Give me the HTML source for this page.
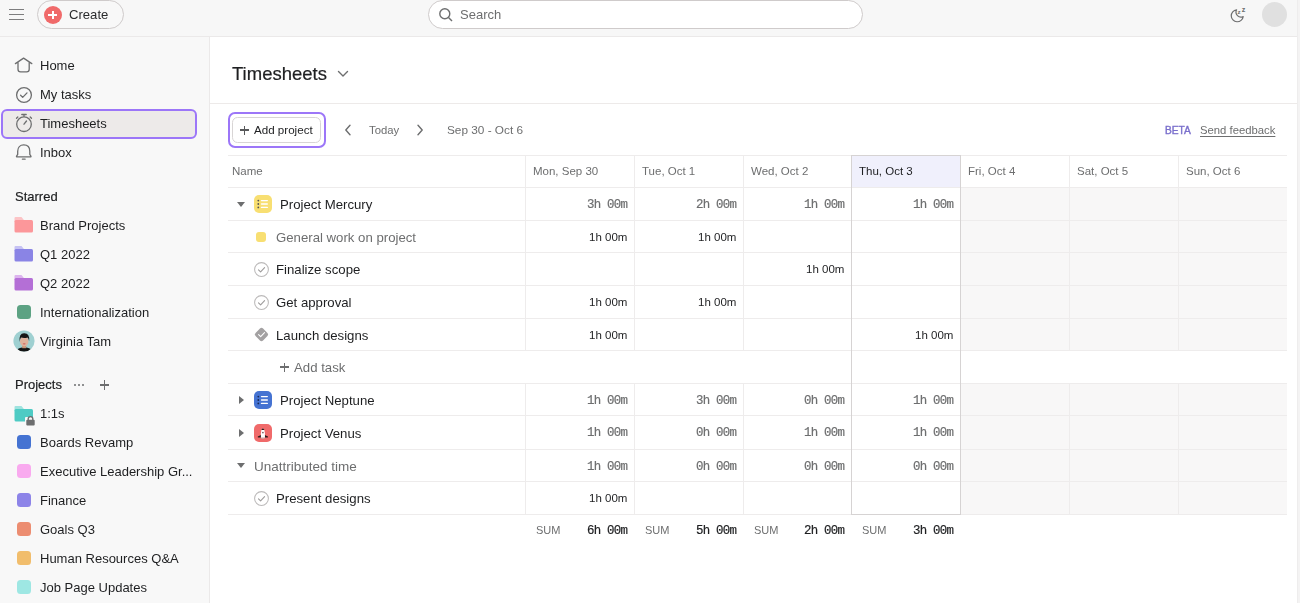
<!DOCTYPE html>
<html><head><meta charset="utf-8">
<style>
*{box-sizing:border-box;margin:0;padding:0}
html,body{width:1300px;height:603px;overflow:hidden}
body{position:relative;background:#f8f7f7;font-family:"Liberation Sans",sans-serif;color:#1e1f21;font-size:13px}
.abs{position:absolute}
#top{position:absolute;left:0;top:0;width:1300px;height:37px;background:#f7f7f7;border-bottom:1px solid #ebe9e9}
#side{position:absolute;left:0;top:37px;width:210px;height:566px;background:#f8f8f8;border-right:1px solid #ebe9e9}
#main{position:absolute;left:210px;top:37px;width:1087px;height:566px;background:#fff}
#rstrip{position:absolute;left:1297px;top:0;width:3px;height:603px;background:#f4f3f3;border-left:1px solid #eeeded}
.nav{position:absolute;left:40px;font-size:13px;color:#1e1f21;line-height:16px}
.ico{position:absolute}
.t{position:absolute;white-space:nowrap;line-height:16px;will-change:transform}
.hl{position:absolute;background:#edeae9}
.mono{font-family:"Liberation Mono",monospace}
.hline{position:absolute;left:228px;width:1059px;height:1px;background:#eeecec}
.vline{position:absolute;width:1px;background:#eeecec}
.hd{font-size:11.5px;color:#6d6e6f}
.mn{font-family:"Liberation Mono",monospace;font-size:12.4px;letter-spacing:-0.75px;color:#6d6e6f;-webkit-text-stroke:0.2px #6d6e6f}
.sn{font-size:11.5px;color:#1e1f21}
.sum{font-size:11px;color:#6d6e6f}
.nm{font-size:13.2px;color:#1e1f21;margin-top:0.7px}
</style></head><body>
<div id="top">
  <!-- hamburger -->
  <div class="abs" style="left:9px;top:8.5px;width:15px;height:1.2px;background:#7d7d7e"></div>
  <div class="abs" style="left:9px;top:14px;width:15px;height:1.2px;background:#7d7d7e"></div>
  <div class="abs" style="left:9px;top:19.2px;width:15px;height:1.2px;background:#7d7d7e"></div>
  <!-- create -->
  <div class="abs" style="left:36.5px;top:0px;width:87px;height:29px;border:1px solid #cfcbcb;border-radius:15px;background:#f8f8f8"></div>
  <div class="abs" style="left:43.5px;top:6px;width:18px;height:18px;border-radius:50%;background:#f06a6a"></div>
  <div class="abs" style="left:48.2px;top:14.1px;width:8.6px;height:2px;background:#fff"></div>
  <div class="abs" style="left:51.5px;top:10.8px;width:2px;height:8.6px;background:#fff"></div>
  <div class="t" style="left:69.3px;top:7px;font-size:13.1px;color:#2a2b2d">Create</div>
  <!-- search -->
  <div class="abs" style="left:428px;top:0px;width:435px;height:29px;border:1px solid #cfcbcb;border-radius:15px;background:#fff"></div>
  <svg class="abs" style="left:438px;top:7px" width="16" height="16" viewBox="0 0 16 16"><circle cx="6.8" cy="6.8" r="5" fill="none" stroke="#6d6e6f" stroke-width="1.4"/><line x1="10.5" y1="10.5" x2="14" y2="14" stroke="#6d6e6f" stroke-width="1.4"/></svg>
  <div class="t" style="left:460px;top:7px;font-size:13px;color:#6d6e6f">Search</div>
  <!-- moon -->
  <svg class="abs" style="left:1228px;top:4px" width="20" height="20" viewBox="0 0 20 20"><path d="M8.6 5.8 A6 6 0 1 0 15.2 12.6 A5 5 0 0 1 8.6 5.8 Z" fill="none" stroke="#6d6e6f" stroke-width="1.2" stroke-linejoin="round"/><text x="9.6" y="9.6" font-size="6.2" fill="#6d6e6f" font-family="Liberation Sans" font-weight="bold">z</text><text x="13.8" y="7.6" font-size="7.2" fill="#6d6e6f" font-family="Liberation Sans" font-weight="bold">z</text></svg>
  <div class="abs" style="left:1262px;top:2px;width:25px;height:25px;border-radius:50%;background:#e0e0e0"></div>
</div>
<div id="rstrip"></div>

<div id="side">
  <!-- Timesheets highlight -->
  <div class="abs" style="left:1px;top:72px;width:196px;height:30px;border:2px solid #9c76f8;border-radius:6px;background:#edeae9"></div>
  <!-- icons -->
  <svg class="abs" style="left:14px;top:19px" width="20" height="18" viewBox="0 0 20 18"><path d="M1.4 7.6 L9.6 2.1 L17.8 7.6 M4 5.9 V13.3 Q4 15.9 6.6 15.9 H12.6 Q15.2 15.9 15.2 13.3 V5.9" fill="none" stroke="#6d6e6f" stroke-width="1.3" stroke-linejoin="round" stroke-linecap="round"/></svg>
  <svg class="abs" style="left:14.8px;top:49px" width="18" height="18" viewBox="0 0 18 18"><circle cx="9" cy="9" r="7.4" fill="none" stroke="#6d6e6f" stroke-width="1.3"/><path d="M5.6 9.3 L7.7 11.4 L12 6.9" fill="none" stroke="#6d6e6f" stroke-width="1.3" stroke-linecap="round" stroke-linejoin="round"/></svg>
  <svg class="abs" style="left:14.7px;top:76px" width="18" height="20" viewBox="0 0 18 20"><circle cx="9" cy="11.2" r="7.3" fill="none" stroke="#6d6e6f" stroke-width="1.3"/><line x1="6.8" y1="1.5" x2="11.2" y2="1.5" stroke="#6d6e6f" stroke-width="1.3" stroke-linecap="round"/><line x1="9" y1="1.5" x2="9" y2="3.8" stroke="#6d6e6f" stroke-width="1.3"/><line x1="9" y1="11.2" x2="11.5" y2="8" stroke="#6d6e6f" stroke-width="1.3" stroke-linecap="round"/><line x1="15.2" y1="4" x2="16.5" y2="5.3" stroke="#6d6e6f" stroke-width="1.3" stroke-linecap="round"/><line x1="2.8" y1="4" x2="1.5" y2="5.3" stroke="#6d6e6f" stroke-width="1.3" stroke-linecap="round"/></svg>
  <svg class="abs" style="left:14px;top:106px" width="20" height="20" viewBox="0 0 20 20"><path d="M3.7 11.4 V8.2 C3.7 4.3 6.1 1.9 9.75 1.9 C13.4 1.9 15.8 4.3 15.8 8.2 V11.4 L16.9 13.1 Q17.3 13.9 16.4 13.9 H3.1 Q2.2 13.9 2.6 13.1 Z" fill="none" stroke="#6d6e6f" stroke-width="1.3" stroke-linejoin="round"/><path d="M8.4 16.2 H11.1" stroke="#6d6e6f" stroke-width="1.3" stroke-linecap="round"/></svg>
  <div class="t" style="left:40px;top:21px;font-size:13px">Home</div>
  <div class="t" style="left:40px;top:50px;font-size:13px">My tasks</div>
  <div class="t" style="left:40px;top:79px;font-size:13px">Timesheets</div>
  <div class="t" style="left:40px;top:108px;font-size:13px">Inbox</div>

  <div class="t" style="left:15px;top:152px;font-size:13px;color:#1e1f21;-webkit-text-stroke:0.2px #1e1f21">Starred</div>
  <!-- folders -->
  <svg class="abs" style="left:14px;top:179px" width="20" height="18" viewBox="0 0 20 18"><path d="M0.5 2 Q0.5 1 1.5 1 H7.5 L9.5 3.5 V6 H0.5 Z" fill="#fcc4c6"/><rect x="0.5" y="4" width="18.5" height="12.5" rx="1.5" fill="#fc979a"/></svg>
  <div class="t" style="left:40px;top:181px;font-size:13px">Brand Projects</div>
  <svg class="abs" style="left:14px;top:208px" width="20" height="18" viewBox="0 0 20 18"><path d="M0.5 2 Q0.5 1 1.5 1 H7.5 L9.5 3.5 V6 H0.5 Z" fill="#c6c2f3"/><rect x="0.5" y="4" width="18.5" height="12.5" rx="1.5" fill="#8a84e5"/></svg>
  <div class="t" style="left:40px;top:210px;font-size:13px">Q1 2022</div>
  <svg class="abs" style="left:14px;top:237px" width="20" height="18" viewBox="0 0 20 18"><path d="M0.5 2 Q0.5 1 1.5 1 H7.5 L9.5 3.5 V6 H0.5 Z" fill="#dcb4ee"/><rect x="0.5" y="4" width="18.5" height="12.5" rx="1.5" fill="#b46fd6"/></svg>
  <div class="t" style="left:40px;top:239px;font-size:13px">Q2 2022</div>
  <div class="abs" style="left:16.5px;top:267.5px;width:14.5px;height:14.5px;border-radius:3.5px;background:#5da283"></div>
  <div class="t" style="left:40px;top:268px;font-size:13px">Internationalization</div>
  <!-- avatar -->
  <svg class="abs" style="left:12.5px;top:293px" width="22" height="22" viewBox="0 0 22 22"><defs><clipPath id="av"><circle cx="11" cy="11" r="10.6"/></clipPath></defs><g clip-path="url(#av)"><rect width="22" height="22" fill="#9fd0d1"/><path d="M2.5 23 Q4 18.2 9 17.6 H13.4 Q18.4 18.2 19.8 23 Z" fill="#141414"/><rect x="9.2" y="14" width="4" height="4.2" fill="#c99478"/><ellipse cx="11.2" cy="11.4" rx="4.2" ry="5" fill="#dfb29c"/><path d="M6.6 12 Q5.6 3 11.3 3.2 Q17 3.2 16.1 11.2 Q15.6 8 14.6 7.4 Q11.6 8.4 8 7.6 Q7 9 6.6 12 Z" fill="#161616"/><ellipse cx="11.2" cy="13.8" rx="1.5" ry="0.6" fill="#d0605a"/></g></svg>
  <div class="t" style="left:40px;top:297px;font-size:13px">Virginia Tam</div>

  <div class="t" style="left:15px;top:340px;font-size:13px;-webkit-text-stroke:0.2px #1e1f21">Projects</div>
  <div class="abs" style="left:73.5px;top:347px;width:2px;height:2px;border-radius:1px;background:#6d6e6f"></div>
  <div class="abs" style="left:77.7px;top:347px;width:2px;height:2px;border-radius:1px;background:#6d6e6f"></div>
  <div class="abs" style="left:81.9px;top:347px;width:2px;height:2px;border-radius:1px;background:#6d6e6f"></div>
  <div class="abs" style="left:99.5px;top:347.3px;width:9.5px;height:1.3px;background:#6d6e6f"></div>
  <div class="abs" style="left:103.6px;top:343px;width:1.3px;height:9.5px;background:#6d6e6f"></div>
  <!-- 1:1s folder with lock -->
  <svg class="abs" style="left:14px;top:368px" width="24" height="22" viewBox="0 0 24 22"><path d="M0.5 2 Q0.5 1 1.5 1 H7.5 L9.5 3.5 V6 H0.5 Z" fill="#9fe3df"/><rect x="0.5" y="4" width="18.5" height="12.5" rx="1.5" fill="#4ecbc4"/><rect x="11" y="12" width="11" height="9" rx="1" fill="#f8f8f8"/><path d="M14.2 15 V13.8 Q14.2 11.6 16.5 11.6 Q18.8 11.6 18.8 13.8 V15" fill="none" stroke="#6d6e6f" stroke-width="1.4"/><rect x="12.3" y="14.8" width="8.4" height="5.6" rx="1" fill="#6d6e6f"/></svg>
  <div class="t" style="left:40px;top:369px;font-size:13px">1:1s</div>
  <div class="abs" style="left:16.5px;top:397.5px;width:14.5px;height:14.5px;border-radius:3.5px;background:#4573d2"></div>
  <div class="t" style="left:40px;top:398px;font-size:13px">Boards Revamp</div>
  <div class="abs" style="left:16.5px;top:426.5px;width:14.5px;height:14.5px;border-radius:3.5px;background:#f9aaef"></div>
  <div class="t" style="left:40px;top:427px;font-size:13px">Executive Leadership Gr...</div>
  <div class="abs" style="left:16.5px;top:455.5px;width:14.5px;height:14.5px;border-radius:3.5px;background:#8d84e8"></div>
  <div class="t" style="left:40px;top:456px;font-size:13px">Finance</div>
  <div class="abs" style="left:16.5px;top:484.5px;width:14.5px;height:14.5px;border-radius:3.5px;background:#ec8d71"></div>
  <div class="t" style="left:40px;top:485px;font-size:13px">Goals Q3</div>
  <div class="abs" style="left:16.5px;top:513.5px;width:14.5px;height:14.5px;border-radius:3.5px;background:#f1bd6c"></div>
  <div class="t" style="left:40px;top:514px;font-size:13px">Human Resources Q&amp;A</div>
  <div class="abs" style="left:16.5px;top:542.5px;width:14.5px;height:14.5px;border-radius:3.5px;background:#9ee7e3"></div>
  <div class="t" style="left:40px;top:543px;font-size:13px">Job Page Updates</div>
</div>

<div id="main"></div>
<!-- title -->
<div class="t" style="left:232px;top:63px;font-size:18.5px;line-height:22px;color:#1e1f21;-webkit-text-stroke:0.2px #1e1f21">Timesheets</div>
<svg class="abs" style="left:336px;top:69px" width="14" height="9" viewBox="0 0 14 9"><path d="M2.5 2.6 L7 7 L11.5 2.6" fill="none" stroke="#6d6e6f" stroke-width="1.4" stroke-linecap="round" stroke-linejoin="round"/></svg>
<div class="abs" style="left:210px;top:103px;width:1087px;height:1px;background:#edeae9"></div>
<!-- toolbar -->
<div class="abs" style="left:228px;top:112px;width:98px;height:36px;border:2px solid #9c76f8;border-radius:7px"></div>
<div class="abs" style="left:231.8px;top:117px;width:89.2px;height:26px;border:1px solid #d8d5d5;border-radius:5.5px;background:#fff"></div>
<div class="abs" style="left:240.2px;top:129.3px;width:9px;height:1.4px;background:#58595b"></div>
<div class="abs" style="left:244px;top:125.5px;width:1.4px;height:9px;background:#58595b"></div>
<div class="t" style="left:254px;top:122px;font-size:11.6px;color:#1e1f21">Add project</div>
<svg class="abs" style="left:343px;top:123px" width="10" height="14" viewBox="0 0 10 14"><path d="M7 2.3 L2.8 7 L7 11.7" fill="none" stroke="#6d6e6f" stroke-width="1.4" stroke-linecap="round" stroke-linejoin="round"/></svg>
<div class="t" style="left:368.5px;top:122px;font-size:11.3px;color:#6d6e6f">Today</div>
<svg class="abs" style="left:414.5px;top:123px" width="10" height="14" viewBox="0 0 10 14"><path d="M3 2.3 L7.2 7 L3 11.7" fill="none" stroke="#6d6e6f" stroke-width="1.4" stroke-linecap="round" stroke-linejoin="round"/></svg>
<div class="t" style="left:447px;top:122px;font-size:11.8px;color:#6d6e6f">Sep 30 - Oct 6</div>
<div class="t" style="left:1164.5px;font-size:10.2px;color:#7a6fcc;-webkit-text-stroke:0.4px #7a6fcc;top:122.6px">BETA</div>
<div class="t" style="left:1199.5px;top:122px;font-size:11.3px;color:#6d6e6f;text-decoration:underline;text-underline-offset:2px">Send feedback</div>
<div class="abs" style="left:960px;top:187px;width:327px;height:33px;background:#f8f7f7"></div>
<div class="abs" style="left:960px;top:220px;width:327px;height:32px;background:#f8f7f7"></div>
<div class="abs" style="left:960px;top:252px;width:327px;height:33px;background:#f8f7f7"></div>
<div class="abs" style="left:960px;top:285px;width:327px;height:33px;background:#f8f7f7"></div>
<div class="abs" style="left:960px;top:318px;width:327px;height:32px;background:#f8f7f7"></div>
<div class="abs" style="left:960px;top:383px;width:327px;height:32px;background:#f8f7f7"></div>
<div class="abs" style="left:960px;top:415px;width:327px;height:34px;background:#f8f7f7"></div>
<div class="abs" style="left:960px;top:449px;width:327px;height:32px;background:#f8f7f7"></div>
<div class="abs" style="left:960px;top:481px;width:327px;height:33px;background:#f8f7f7"></div>
<div class="abs" style="left:851px;top:155px;width:109px;height:32px;background:#f0f0fc"></div>
<div class="hline" style="top:155px"></div>
<div class="hline" style="top:187px"></div>
<div class="hline" style="top:220px"></div>
<div class="hline" style="top:252px"></div>
<div class="hline" style="top:285px"></div>
<div class="hline" style="top:318px"></div>
<div class="hline" style="top:350px"></div>
<div class="hline" style="top:383px"></div>
<div class="hline" style="top:415px"></div>
<div class="hline" style="top:449px"></div>
<div class="hline" style="top:481px"></div>
<div class="hline" style="top:514px"></div>
<div class="vline" style="left:525px;top:155px;height:32px"></div>
<div class="vline" style="left:634px;top:155px;height:32px"></div>
<div class="vline" style="left:743px;top:155px;height:32px"></div>
<div class="vline" style="left:1069px;top:155px;height:32px"></div>
<div class="vline" style="left:1178px;top:155px;height:32px"></div>
<div class="vline" style="left:525px;top:187px;height:33px"></div>
<div class="vline" style="left:634px;top:187px;height:33px"></div>
<div class="vline" style="left:743px;top:187px;height:33px"></div>
<div class="vline" style="left:1069px;top:187px;height:33px"></div>
<div class="vline" style="left:1178px;top:187px;height:33px"></div>
<div class="vline" style="left:525px;top:220px;height:32px"></div>
<div class="vline" style="left:634px;top:220px;height:32px"></div>
<div class="vline" style="left:743px;top:220px;height:32px"></div>
<div class="vline" style="left:1069px;top:220px;height:32px"></div>
<div class="vline" style="left:1178px;top:220px;height:32px"></div>
<div class="vline" style="left:525px;top:252px;height:33px"></div>
<div class="vline" style="left:634px;top:252px;height:33px"></div>
<div class="vline" style="left:743px;top:252px;height:33px"></div>
<div class="vline" style="left:1069px;top:252px;height:33px"></div>
<div class="vline" style="left:1178px;top:252px;height:33px"></div>
<div class="vline" style="left:525px;top:285px;height:33px"></div>
<div class="vline" style="left:634px;top:285px;height:33px"></div>
<div class="vline" style="left:743px;top:285px;height:33px"></div>
<div class="vline" style="left:1069px;top:285px;height:33px"></div>
<div class="vline" style="left:1178px;top:285px;height:33px"></div>
<div class="vline" style="left:525px;top:318px;height:32px"></div>
<div class="vline" style="left:634px;top:318px;height:32px"></div>
<div class="vline" style="left:743px;top:318px;height:32px"></div>
<div class="vline" style="left:1069px;top:318px;height:32px"></div>
<div class="vline" style="left:1178px;top:318px;height:32px"></div>
<div class="vline" style="left:525px;top:383px;height:32px"></div>
<div class="vline" style="left:634px;top:383px;height:32px"></div>
<div class="vline" style="left:743px;top:383px;height:32px"></div>
<div class="vline" style="left:1069px;top:383px;height:32px"></div>
<div class="vline" style="left:1178px;top:383px;height:32px"></div>
<div class="vline" style="left:525px;top:415px;height:34px"></div>
<div class="vline" style="left:634px;top:415px;height:34px"></div>
<div class="vline" style="left:743px;top:415px;height:34px"></div>
<div class="vline" style="left:1069px;top:415px;height:34px"></div>
<div class="vline" style="left:1178px;top:415px;height:34px"></div>
<div class="vline" style="left:525px;top:449px;height:32px"></div>
<div class="vline" style="left:634px;top:449px;height:32px"></div>
<div class="vline" style="left:743px;top:449px;height:32px"></div>
<div class="vline" style="left:1069px;top:449px;height:32px"></div>
<div class="vline" style="left:1178px;top:449px;height:32px"></div>
<div class="vline" style="left:525px;top:481px;height:33px"></div>
<div class="vline" style="left:634px;top:481px;height:33px"></div>
<div class="vline" style="left:743px;top:481px;height:33px"></div>
<div class="vline" style="left:1069px;top:481px;height:33px"></div>
<div class="vline" style="left:1178px;top:481px;height:33px"></div>
<div class="abs" style="left:851px;top:155px;width:110px;height:360px;border:1px solid #d6d3d3"></div>
<div class="t hd" style="left:232px;top:163.4px">Name</div>
<div class="t hd" style="left:533px;top:163.4px;color:#6d6e6f">Mon, Sep 30</div>
<div class="t hd" style="left:642px;top:163.4px;color:#6d6e6f">Tue, Oct 1</div>
<div class="t hd" style="left:751px;top:163.4px;color:#6d6e6f">Wed, Oct 2</div>
<div class="t hd" style="left:859px;top:163.4px;color:#1e1f21">Thu, Oct 3</div>
<div class="t hd" style="left:968px;top:163.4px;color:#6d6e6f">Fri, Oct 4</div>
<div class="t hd" style="left:1077px;top:163.4px;color:#6d6e6f">Sat, Oct 5</div>
<div class="t hd" style="left:1186px;top:163.4px;color:#6d6e6f">Sun, Oct 6</div>
<div class="t mn" style="right:673.25px;top:196.8px">3h 00m</div>
<div class="t mn" style="right:564.25px;top:196.8px">2h 00m</div>
<div class="t mn" style="right:456.25px;top:196.8px">1h 00m</div>
<div class="t mn" style="right:347.25px;top:196.8px">1h 00m</div>
<div class="t sn" style="right:673px;top:228.5px">1h 00m</div>
<div class="t sn" style="right:564px;top:228.5px">1h 00m</div>
<div class="t sn" style="right:456px;top:260.5px">1h 00m</div>
<div class="t sn" style="right:673px;top:293.5px">1h 00m</div>
<div class="t sn" style="right:564px;top:293.5px">1h 00m</div>
<div class="t sn" style="right:673px;top:326.5px">1h 00m</div>
<div class="t sn" style="right:347px;top:326.5px">1h 00m</div>
<div class="t mn" style="right:673.25px;top:392.8px">1h 00m</div>
<div class="t mn" style="right:564.25px;top:392.8px">3h 00m</div>
<div class="t mn" style="right:456.25px;top:392.8px">0h 00m</div>
<div class="t mn" style="right:347.25px;top:392.8px">1h 00m</div>
<div class="t mn" style="right:673.25px;top:424.8px">1h 00m</div>
<div class="t mn" style="right:564.25px;top:424.8px">0h 00m</div>
<div class="t mn" style="right:456.25px;top:424.8px">1h 00m</div>
<div class="t mn" style="right:347.25px;top:424.8px">1h 00m</div>
<div class="t mn" style="right:673.25px;top:458.8px">1h 00m</div>
<div class="t mn" style="right:564.25px;top:458.8px">0h 00m</div>
<div class="t mn" style="right:456.25px;top:458.8px">0h 00m</div>
<div class="t mn" style="right:347.25px;top:458.8px">0h 00m</div>
<div class="t sn" style="right:673px;top:489.5px">1h 00m</div>
<div class="t sum" style="left:536px;top:522px">SUM</div>
<div class="t mn" style="right:673.25px;top:522.6px;color:#1e1f21;-webkit-text-stroke:0.2px #1e1f21">6h 00m</div>
<div class="t sum" style="left:645px;top:522px">SUM</div>
<div class="t mn" style="right:564.25px;top:522.6px;color:#1e1f21;-webkit-text-stroke:0.2px #1e1f21">5h 00m</div>
<div class="t sum" style="left:754px;top:522px">SUM</div>
<div class="t mn" style="right:456.25px;top:522.6px;color:#1e1f21;-webkit-text-stroke:0.2px #1e1f21">2h 00m</div>
<div class="t sum" style="left:862px;top:522px">SUM</div>
<div class="t mn" style="right:347.25px;top:522.6px;color:#1e1f21;-webkit-text-stroke:0.2px #1e1f21">3h 00m</div>
<!-- name column -->
<svg class="abs" style="left:236px;top:201px" width="10" height="7" viewBox="0 0 10 7"><path d="M1 1 H9 L5 6 Z" fill="#6d6e6f"/></svg>
<svg class="abs" style="left:254px;top:195.3px" width="18" height="18" viewBox="0 0 18 18"><rect width="18" height="18" rx="5" fill="#f8df72"/><circle cx="4.3" cy="5.6" r="0.9" fill="#555"/><circle cx="4.3" cy="9" r="0.9" fill="#555"/><circle cx="4.3" cy="12.4" r="0.9" fill="#555"/><rect x="6.8" y="4.9" width="7.2" height="1.4" rx="0.7" fill="#fff"/><rect x="6.8" y="8.3" width="7.2" height="1.4" rx="0.7" fill="#fff"/><rect x="6.8" y="11.7" width="7.2" height="1.4" rx="0.7" fill="#fff"/></svg>
<div class="t nm" style="left:279.5px;top:196px">Project Mercury</div>
<div class="abs" style="left:256px;top:231.7px;width:10.2px;height:10.2px;border-radius:3px;background:#f8df72"></div>
<div class="t nm" style="left:275.7px;top:229px;color:#6d6e6f">General work on project</div>
<svg class="abs" style="left:253.5px;top:261.8px" width="15" height="15" viewBox="0 0 15 15"><circle cx="7.5" cy="7.5" r="6.9" fill="none" stroke="#bcbaba" stroke-width="1.05"/><path d="M4.5 7.8 L6.6 9.8 L10.6 5.6" fill="none" stroke="#9d9b9b" stroke-width="1.1" stroke-linecap="round" stroke-linejoin="round"/></svg>
<div class="t nm" style="left:275.7px;top:261.5px">Finalize scope</div>
<svg class="abs" style="left:253.5px;top:294.5px" width="15" height="15" viewBox="0 0 15 15"><circle cx="7.5" cy="7.5" r="6.9" fill="none" stroke="#bcbaba" stroke-width="1.05"/><path d="M4.5 7.8 L6.6 9.8 L10.6 5.6" fill="none" stroke="#9d9b9b" stroke-width="1.1" stroke-linecap="round" stroke-linejoin="round"/></svg>
<div class="t nm" style="left:275.7px;top:294px">Get approval</div>
<svg class="abs" style="left:253.5px;top:327.2px" width="15" height="15" viewBox="0 0 15 15"><rect x="2.2" y="2.2" width="10.6" height="10.6" rx="2.2" transform="rotate(45 7.5 7.5)" fill="#a3a1a2"/><path d="M4.6 7.7 L6.7 9.6 L10.5 5.7" fill="none" stroke="#fff" stroke-width="1.1" stroke-linecap="round" stroke-linejoin="round"/></svg>
<div class="t nm" style="left:275.7px;top:327px">Launch designs</div>
<div class="abs" style="left:280px;top:366.3px;width:9px;height:1.4px;background:#6d6e6f"></div>
<div class="abs" style="left:283.8px;top:362.5px;width:1.4px;height:9px;background:#6d6e6f"></div>
<div class="t nm" style="left:294.2px;top:359px;color:#6d6e6f">Add task</div>
<svg class="abs" style="left:238px;top:395px" width="7" height="10" viewBox="0 0 7 10"><path d="M1 1 V9 L6 5 Z" fill="#6d6e6f"/></svg>
<svg class="abs" style="left:254px;top:391px" width="18" height="18" viewBox="0 0 18 18"><rect width="18" height="18" rx="5" fill="#4573d2"/><circle cx="4.3" cy="5.6" r="0.9" fill="#1b2a55"/><circle cx="4.3" cy="9" r="0.9" fill="#1b2a55"/><circle cx="4.3" cy="12.4" r="0.9" fill="#1b2a55"/><rect x="6.8" y="4.9" width="7.2" height="1.4" rx="0.7" fill="#fff"/><rect x="6.8" y="8.3" width="7.2" height="1.4" rx="0.7" fill="#fff"/><rect x="6.8" y="11.7" width="7.2" height="1.4" rx="0.7" fill="#fff"/></svg>
<div class="t nm" style="left:279.5px;top:392px">Project Neptune</div>
<svg class="abs" style="left:238px;top:428px" width="7" height="10" viewBox="0 0 7 10"><path d="M1 1 V9 L6 5 Z" fill="#6d6e6f"/></svg>
<svg class="abs" style="left:254px;top:424.3px" width="18" height="18" viewBox="0 0 18 18"><rect width="18" height="18" rx="5" fill="#f06a6a"/><path d="M7 11 L3.8 12.6 Q3.4 13.6 4.3 13.6 H7 Z M10.8 11 L14 12.6 Q14.4 13.6 13.5 13.6 H10.8 Z" fill="#2b1c1c"/><path d="M8.9 4.3 Q10.9 5.8 10.9 9.2 V13.8 H6.9 V9.2 Q6.9 5.8 8.9 4.3 Z" fill="#fff"/><path d="M8.9 4.3 Q9.9 5 10.4 5.9 H7.4 Q7.9 5 8.9 4.3 Z" fill="#2b1c1c"/><rect x="8.2" y="7.9" width="1.4" height="1.4" fill="#6b4a4a"/><rect x="7.3" y="13.6" width="3.2" height="1" fill="#bbb"/></svg>
<div class="t nm" style="left:279.5px;top:425px">Project Venus</div>
<svg class="abs" style="left:236px;top:462px" width="10" height="7" viewBox="0 0 10 7"><path d="M1 1 H9 L5 6 Z" fill="#6d6e6f"/></svg>
<div class="t nm" style="left:254px;top:458px;color:#6d6e6f;font-size:13.5px">Unattributed time</div>
<svg class="abs" style="left:253.5px;top:490.5px" width="15" height="15" viewBox="0 0 15 15"><circle cx="7.5" cy="7.5" r="6.9" fill="none" stroke="#bcbaba" stroke-width="1.05"/><path d="M4.5 7.8 L6.6 9.8 L10.6 5.6" fill="none" stroke="#9d9b9b" stroke-width="1.1" stroke-linecap="round" stroke-linejoin="round"/></svg>
<div class="t nm" style="left:275.7px;top:490.5px">Present designs</div>

</body></html>
